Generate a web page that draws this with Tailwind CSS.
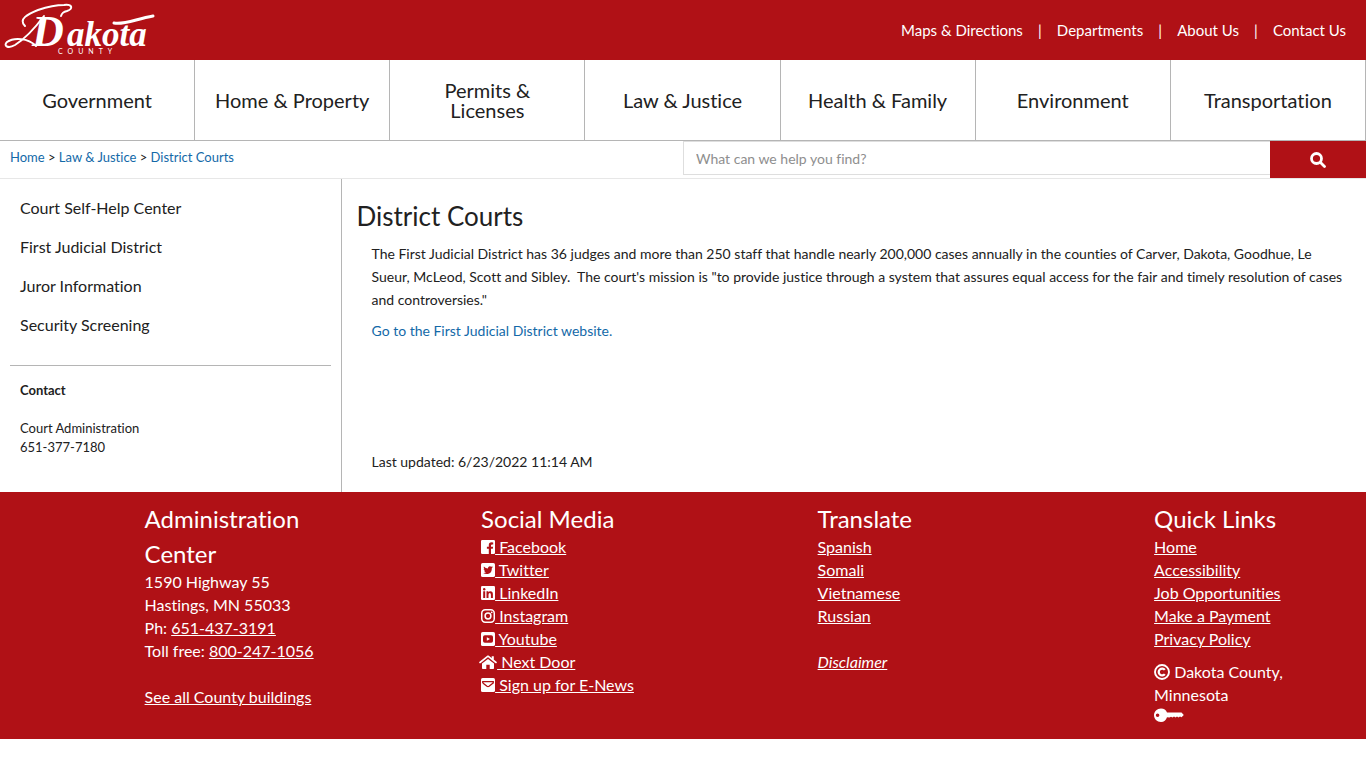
<!DOCTYPE html>
<html lang="en">
<head>
<meta charset="utf-8">
<meta name="viewport" content="width=device-width, initial-scale=1">
<title>District Courts | Dakota County</title>
<script src="https://cdn.jsdelivr.net/npm/@tailwindcss/browser@4"></script>
</head>
<body class="bg-white font-['Lato','Open_Sans',sans-serif] text-[#212121] [font-variant-ligatures:no-common-ligatures]">

<header>
  <div class="flex h-[60px] items-center justify-between bg-[#b01116] pr-5 pl-1 text-white">
    <a href="#" aria-label="Dakota County home">
      <svg class="block" width="153" height="60" viewBox="0 -3 153 60" fill="none" stroke="#fff" stroke-linecap="round" stroke-linejoin="round">
        <!-- swashes around the wordmark -->
        <path stroke-width="2" d="M21 23C14 16 24 11 34 7C46 3 54 2 60 2C69 1 69 6 63 8C59 9 58 10 57 13"/>
        <path stroke-width="2" d="M32 43C24 35 10 34 3 39C-1 43 4 46 11 42C19 37 28 29 40 13"/>
        <path stroke-width="3" d="M110 20C120 22 132 16 149 13"/>
        <text x="28" y="43" font-family="Liberation Serif" font-style="italic" font-weight="bold" font-size="44" fill="#fff" stroke="none">D</text>
        <text x="63" y="43" font-family="Liberation Serif" font-style="italic" font-weight="bold" font-size="35" fill="#fff" stroke="none">akota</text>
        <text x="54" y="51" font-family="Lato" font-size="7" letter-spacing="5" fill="#fff" stroke="none">COUNTY</text>
      </svg>
    </a>
    <nav aria-label="Utility" class="flex items-center text-[15px] leading-5">
      <a href="#">Maps &amp; Directions</a><span class="w-[34px] text-center">|</span>
      <a href="#">Departments</a><span class="w-[34px] text-center">|</span>
      <a href="#">About Us</a><span class="w-[34px] text-center">|</span>
      <a href="#">Contact Us</a>
    </nav>
  </div>

  <nav aria-label="Main" class="grid h-[81px] grid-cols-7 border-b border-[#b5b5b5] text-center text-xl leading-5">
    <a href="#" class="flex items-center justify-center border-r border-[#b5b5b5] px-[18px]">Government</a>
    <a href="#" class="flex items-center justify-center border-r border-[#b5b5b5] px-[18px]">Home &amp; Property</a>
    <a href="#" class="flex items-center justify-center border-r border-[#b5b5b5] px-[18px]">Permits &amp; Licenses</a>
    <a href="#" class="flex items-center justify-center border-r border-[#b5b5b5] px-[18px]">Law &amp; Justice</a>
    <a href="#" class="flex items-center justify-center border-r border-[#b5b5b5] px-[18px]">Health &amp; Family</a>
    <a href="#" class="flex items-center justify-center border-r border-[#b5b5b5] px-[18px]">Environment</a>
    <a href="#" class="flex items-center justify-center border-r border-[#b5b5b5] px-[18px]">Transportation</a>
  </nav>
</header>

<div class="grid h-[38px] grid-cols-2 border-b border-[#e7e7e7]">
  <nav aria-label="Breadcrumb" class="pt-[7px] pl-[10px] text-[13px] leading-[18px]">
    <a href="#" class="text-[#1369a8]">Home</a> &gt; <a href="#" class="text-[#1369a8]">Law &amp; Justice</a> &gt; <a href="#" class="text-[#1369a8]">District Courts</a>
  </nav>
  <form class="flex items-start" onsubmit="return false">
    <input type="search" aria-label="Search" placeholder="What can we help you find?" class="h-[34px] min-w-0 flex-1 border border-r-0 border-[#dedede] px-3 text-sm text-[#333] outline-none placeholder:text-[#8e8e8e]">
    <button aria-label="Search" class="flex h-[37px] w-24 items-center justify-center bg-[#b01116] text-white">
      <svg width="16" height="16" viewBox="0 0 16 16" fill="none" stroke="currentColor" stroke-width="2.8" stroke-linecap="round"><circle cx="6.500" cy="6.500" r="5"/><path d="M10.500 10.500L14.500 14.500"/></svg>
    </button>
  </form>
</div>

<div class="flex min-h-[313px]">
  <aside class="w-1/4 shrink-0 border-r border-[#b5b5b5] px-[10px] pt-[9px]">
    <nav aria-label="Section" class="flex flex-col px-[10px] text-base leading-[39px]">
      <a href="#">Court Self-Help Center</a>
      <a href="#">First Judicial District</a>
      <a href="#">Juror Information</a>
      <a href="#">Security Screening</a>
    </nav>
    <hr class="mt-[21px] border-[#b5b5b5]">
    <section class="px-[10px] pt-[15px] text-[13px] leading-[19px]">
      <h2 class="font-bold">Contact</h2>
      <p class="pt-[19px]">Court Administration<br>651-377-7180</p>
    </section>
  </aside>
  <main class="min-w-0 flex-1 pl-[15px] pt-[19px]">
    <h1 class="text-[26px] leading-9">District Courts</h1>
    <div class="pr-5 pl-[15px] pt-2 text-sm leading-[23px]">
      <p>The First Judicial District has 36 judges and more than 250 staff that handle nearly 200,000 cases annually in the counties of Carver, Dakota, Goodhue, Le Sueur, McLeod, Scott and Sibley.&nbsp; The court's mission is "to provide justice through a system that assures equal access for the fair and timely resolution of cases and controversies."</p>
      <p class="pt-2"><a href="#" class="text-[#1369a8]">Go to the First Judicial District website.</a></p>
      <p class="pt-[108px]">Last updated: 6/23/2022 11:14 AM</p>
    </div>
  </main>
</div>

<footer class="grid grid-cols-4 bg-[#b01116] px-[10px] pt-[9px] pb-4 text-base leading-[23px] text-white">
  <section class="pl-[40%]">
    <h2 class="-mb-px text-2xl leading-[35px]">Administration Center</h2>
    <p>1590 Highway 55<br>Hastings, MN 55033<br>Ph: <a href="#" class="underline">651-437-3191</a><br><span class="whitespace-nowrap">Toll free: <a href="#" class="underline">800-247-1056</a></span></p>
    <p class="pt-[23px]"><a href="#" class="underline">See all County buildings</a></p>
  </section>
  <section class="pl-[40%]">
    <h2 class="-mb-px text-2xl leading-[35px]">Social Media</h2>
    <ul class="whitespace-nowrap">
      <li><a href="#" class="underline"><svg class="inline-block align-[-1px]" width="14" height="14" viewBox="0 0 14 14"><path fill="#fff" d="M1.2 0H12.8Q14 0 14 1.2V12.8Q14 14 12.8 14H10V8.8H11.8L12.1 6.7H10V5.4Q10 4.4 11.1 4.4H12.2V2.5Q11.4 2.3 10.5 2.3Q7.8 2.3 7.8 5V6.7H5.9V8.8H7.8V14H1.2Q0 14 0 12.8V1.2Q0 0 1.2 0Z"/></svg> Facebook</a></li>
      <li><a href="#" class="underline"><svg class="inline-block align-[-1px]" width="14" height="14" viewBox="0 0 14 14"><rect width="14" height="14" rx="1.6" fill="#fff"/><path fill="#b01116" d="M11.8 4.1Q11.3 4.3 10.8 4.4Q11.4 4 11.6 3.3Q11 3.7 10.3 3.8A1.95 1.95 0 0 0 7 5.6Q4.500 5.500 2.900 3.500Q2.200 5.200 3.500 6.200Q3 6.200 2.600 5.900Q2.700 7.400 4.200 7.900Q3.700 8 3.300 7.900Q3.700 9.200 5.100 9.300Q3.900 10.200 2.200 10.100Q5.300 11.900 8.200 10.500Q11 9 10.800 5.200Q11.400 4.800 11.800 4.100Z"/></svg> Twitter</a></li>
      <li><a href="#" class="underline"><svg class="inline-block align-[-1px]" width="14" height="14" viewBox="0 0 14 14"><rect width="14" height="14" rx="1.200" fill="#fff"/><g fill="#b01116"><circle cx="3.200" cy="3.300" r="1.200"/><path d="M2.200 5.300H4.200V12H2.200ZM5.500 5.300H7.400V6.200Q8 5.200 9.400 5.200Q11.900 5.200 11.900 8.200V12H9.900V8.700Q9.900 6.900 8.800 6.900Q7.500 6.900 7.500 8.700V12H5.500Z"/></g></svg> LinkedIn</a></li>
      <li><a href="#" class="underline"><svg class="inline-block align-[-1px]" width="14" height="14" viewBox="0 0 14 14" fill="none" stroke="#fff" stroke-width="1.500"><rect x=".75" y=".75" width="12.500" height="12.500" rx="3.400"/><circle cx="7" cy="7" r="2.900"/><circle cx="10.700" cy="3.300" r=".9" fill="#fff" stroke="none"/></svg> Instagram</a></li>
      <li><a href="#" class="underline"><svg class="inline-block align-[-1px]" width="14" height="14" viewBox="0 0 14 14"><rect width="14" height="14" rx="1.600" fill="#fff"/><rect x="2" y="3.300" width="10" height="7.400" rx="1.800" fill="#b01116"/><path fill="#fff" d="M5.800 5.200L9 7L5.800 8.800Z"/></svg> Youtube</a></li>
      <li><a href="#" class="-ml-[2px] underline"><svg class="inline-block align-[-1px]" width="18" height="14" viewBox="0 0 18 14"><path fill="none" stroke="#fff" stroke-width="1.600" stroke-linecap="round" stroke-linejoin="round" d="M1 7.500L9 1.200L17 7.500"/><path fill="#fff" d="M12.700 1.200H14.800V5L12.700 3.400ZM9 3.900L15 8.600V13.200Q15 14 14.200 14H10.700V9.800H7.300V14H3.800Q3 14 3 13.200V8.600Z"/></svg> Next Door</a></li>
      <li><a href="#" class="underline"><svg class="inline-block align-[-1px]" width="14" height="14" viewBox="0 0 14 14"><rect width="14" height="14" rx="1.600" fill="#fff"/><path fill="none" stroke="#b01116" stroke-width="1.400" d="M1.800 5V3.600H12.200V5L8 8.300Q7 9 6 8.300L1.800 5"/></svg> Sign up for E-News</a></li>
    </ul>
  </section>
  <section class="pl-[40%]">
    <h2 class="-mb-px text-2xl leading-[35px]">Translate</h2>
    <ul>
      <li><a href="#" class="underline">Spanish</a></li>
      <li><a href="#" class="underline">Somali</a></li>
      <li><a href="#" class="underline">Vietnamese</a></li>
      <li><a href="#" class="underline">Russian</a></li>
    </ul>
    <p class="pt-[23px] italic"><a href="#" class="underline">Disclaimer</a></p>
  </section>
  <section class="pl-[40%]">
    <h2 class="-mb-px text-2xl leading-[35px]">Quick Links</h2>
    <ul>
      <li><a href="#" class="underline">Home</a></li>
      <li><a href="#" class="underline">Accessibility</a></li>
      <li><a href="#" class="underline">Job Opportunities</a></li>
      <li><a href="#" class="underline">Make a Payment</a></li>
      <li><a href="#" class="underline">Privacy Policy</a></li>
    </ul>
    <p class="pt-[10px]"><svg class="inline-block align-[-2px]" width="16" height="16" viewBox="0 0 16 16" fill="none" stroke="#fff"><circle cx="8" cy="8" r="7" stroke-width="1.900"/><path stroke-width="2.300" d="M10.800 10.100A3.400 3.400 0 1 1 10.800 5.900"/></svg> Dakota County, Minnesota</p>
    <a href="#" aria-label="Staff login" class="block pt-[2px]"><svg width="30" height="15" viewBox="0 0 30 15"><path fill="#fff" fill-rule="evenodd" d="M7 .5C10 .5 12 2 13 4.500H27.500L29.800 7L27.500 9.300L26 8.500L24.500 9.600L23 8.500L21.500 9.600L20 8.500L18.500 9.600L17 8.700L15.500 9.600L13 9.300C12 12.500 10 14 7 14C3 14 0 11 0 7.300C0 3.500 3 .5 7 .5ZM3.600 5.500A1.800 1.800 0 1 0 3.600 9.100A1.800 1.800 0 1 0 3.600 5.500Z"/></svg></a>
  </section>
</footer>
</body>
</html>
